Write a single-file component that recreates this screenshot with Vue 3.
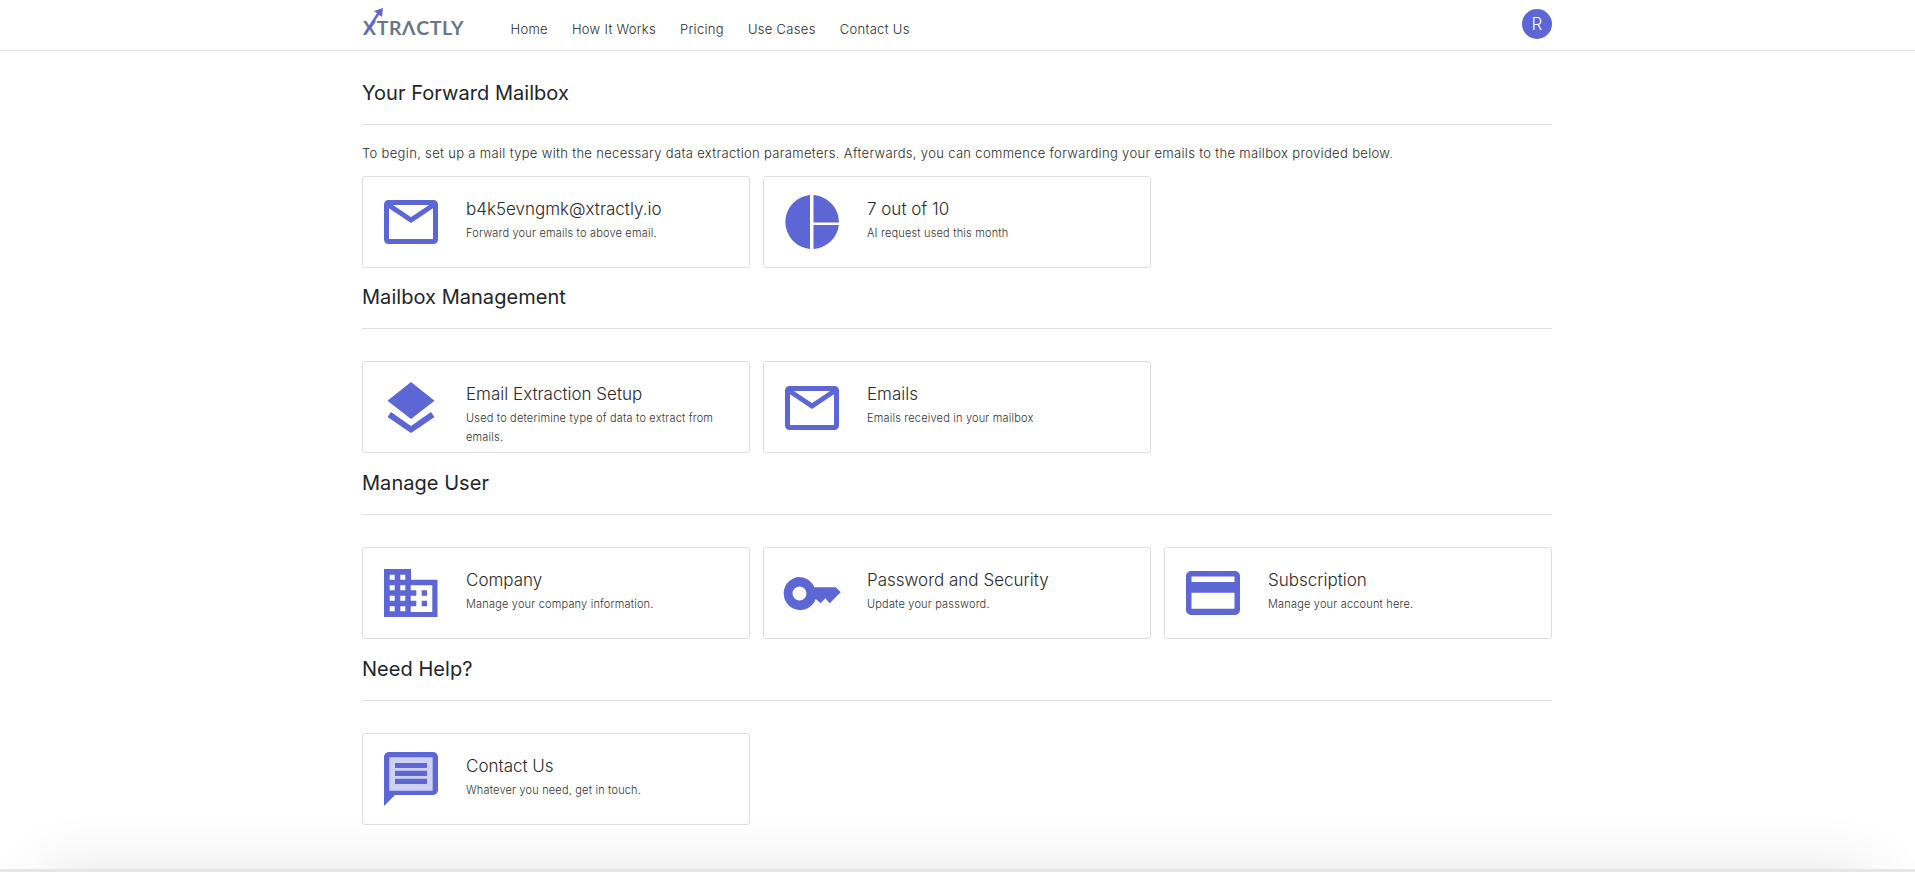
<script setup>
const sections = [
  {
    title: 'Your Forward Mailbox',
    intro: 'To begin, set up a mail type with the necessary data extraction parameters. Afterwards, you can commence forwarding your emails to the mailbox provided below.',
    cards: [
      { icon: 'mail', title: 'b4k5evngmk@xtractly.io', sub: 'Forward your emails to above email.' },
      { icon: 'pie', title: '7 out of 10', sub: 'AI request used this month' },
    ],
  },
  {
    title: 'Mailbox Management',
    cards: [
      { icon: 'layers', title: 'Email Extraction Setup', sub: 'Used to deterimine type of data to extract from emails.' },
      { icon: 'mail', title: 'Emails', sub: 'Emails received in your mailbox' },
    ],
  },
  {
    title: 'Manage User',
    cards: [
      { icon: 'building', title: 'Company', sub: 'Manage your company information.' },
      { icon: 'key', title: 'Password and Security', sub: 'Update your password.' },
      { icon: 'card', title: 'Subscription', sub: 'Manage your account here.' },
    ],
  },
  {
    title: 'Need Help?',
    cards: [
      { icon: 'chat', title: 'Contact Us', sub: 'Whatever you need, get in touch.' },
    ],
  },
]
const nav = ['Home', 'How It Works', 'Pricing', 'Use Cases', 'Contact Us']
</script>

<template>
  <div class="page">
    <header class="topbar">
      <div class="topbar-inner">
        <a class="logo">
          <span class="logo-text">XTRΛCTLY</span>
          <svg class="logo-arrow" width="22" height="30" viewBox="0 0 22 30">
            <path d="M2 27 L17 4" stroke="#5c66d4" stroke-width="2.4" fill="none" />
            <path d="M11 4 L20 1 L19 10 Z" fill="#5c66d4" />
          </svg>
        </a>
        <nav class="nav">
          <a v-for="item in nav" :key="item">{{ item }}</a>
        </nav>
        <div class="avatar">R</div>
      </div>
    </header>

    <main class="content">
      <section v-for="s in sections" :key="s.title" class="section">
        <h2>{{ s.title }}</h2>
        <hr />
        <p v-if="s.intro" class="intro">{{ s.intro }}</p>
        <div class="grid" :class="{ 'grid-intro': s.intro }">
          <div v-for="c in s.cards" :key="c.title" class="card">
            <div class="icon-box">
              <svg v-if="c.icon === 'mail'" width="54" height="44" viewBox="0 0 54 44">
                <rect x="2.5" y="2.500" width="49" height="39" rx="2" fill="none" stroke="#5c66d4" stroke-width="5" />
                <path d="M3 4 L27 20 L51 4" fill="none" stroke="#5c66d4" stroke-width="5" />
              </svg>
              <svg v-else-if="c.icon === 'pie'" width="54" height="54" viewBox="0 0 54 54">
                <path d="M25 0.1 A27 27 0 0 0 25 53.9 Z" fill="#5c66d4" />
                <path d="M28.500 0.1 A27 27 0 0 1 53.9 27.500 L28.500 27.500 Z" fill="#5c66d4" />
                <path d="M28.500 30 L53.800 30 A27 27 0 0 1 28.500 53.900 Z" fill="#5c66d4" />
              </svg>
              <svg v-else-if="c.icon === 'layers'" width="48" height="51" viewBox="0 0 48 51">
                <path d="M24 0 L47.5 18.7 L24 37 L0.5 18.7 Z" fill="#5c66d4" />
                <path d="M0.5 35 L4 30 L24 44 L44 30 L47.5 35 L24 51 Z" fill="#5c66d4" />
              </svg>
              <svg v-else-if="c.icon === 'building'" width="54" height="48" viewBox="0 0 54 48">
                <path d="M0 0 H27 V10.700 H53.500 V48 H0 Z" fill="#5c66d4" />
                <path d="M5.700 5.700 h5 v5 h-5 z M16.300 5.700 h5 v5 h-5 z M5.700 16.300 h5 v5 h-5 z M16.300 16.300 h5 v5 h-5 z M5.700 26.700 h5 v5 h-5 z M16.300 26.700 h5 v5 h-5 z M5.700 37.300 h5 v5 h-5 z M16.300 37.300 h5 v5 h-5 z" fill="#fff" />
                <path d="M26.700 16.300 H48.300 V43 H26.700 V37.300 H32.300 V31.700 H26.700 V26.700 H32.300 V21.300 H26.700 Z" fill="#fff" />
                <path d="M37.700 21.300 h5.300 v5.400 h-5.300 z M37.700 31.700 h5.300 v5.600 h-5.300 z" fill="#5c66d4" />
              </svg>
              <svg v-else-if="c.icon === 'key'" width="58" height="33" viewBox="0 0 58 33">
                <path fill-rule="evenodd" d="M16.500 0 A16.500 16.500 0 0 1 31.500 10.300 H52.700 L57.700 15.300 L46.700 26.300 L42.300 21.300 L37.700 26.300 L32.700 22 A16.500 16.500 0 1 1 16.500 0 Z M16.500 9.500 A7 7 0 1 0 16.500 23.500 A7 7 0 1 0 16.500 9.500 Z" fill="#5c66d4" />
              </svg>
              <svg v-else-if="c.icon === 'card'" width="54" height="44" viewBox="0 0 54 44">
                <path fill-rule="evenodd" d="M5 0 H49 A5 5 0 0 1 54 5 V39 A5 5 0 0 1 49 44 H5 A5 5 0 0 1 0 39 V5 A5 5 0 0 1 5 0 Z M5.500 5.500 V11 H48.500 V5.500 Z M5.500 21.700 V37.700 H48.500 V21.700 Z" fill="#5c66d4" />
              </svg>
              <svg v-else width="54" height="54" viewBox="0 0 54 54">
                <path d="M5 0 H49 A5 5 0 0 1 54 5 V38 A5 5 0 0 1 49 43 H11 L0 54 V5 A5 5 0 0 1 5 0 Z" fill="#5c66d4" />
                <path d="M5.300 5.300 H48.700 V38.700 H5.300 Z" fill="#ced1f1" />
                <path d="M11 11 H43 V16 H11 Z M11 18.700 H43 V24 H11 Z M11 26.700 H43 V32 H11 Z" fill="#5c66d4" />
              </svg>
            </div>
            <div class="card-text">
              <h3>{{ c.title }}</h3>
              <p>{{ c.sub }}</p>
            </div>
          </div>
        </div>
      </section>
    </main>

    <footer class="bottom"></footer>
  </div>
</template>

<style>
html, body { margin: 0; overflow: hidden; background: #fff; }
</style>

<style scoped>
.page {
  height: 872px;
  overflow: hidden;
  position: relative;
  font-family: "Inter", "Liberation Sans", sans-serif;
  color: #333;
  background: #fff;
}
.topbar {
  height: 50px;
  border-bottom: 1px solid #e3e3e3;
}
.topbar-inner {
  width: 1190px;
  margin: 0 0 0 362px;
  height: 100%;
  display: flex;
  align-items: center;
}
.logo {
  position: relative;
  width: 148.5px;
  height: 50px;
  display: flex;
  align-items: center;
}
.logo-text {
  font-family: "Lato", sans-serif;
  font-weight: 700;
  font-size: 19.5px;
  letter-spacing: 0.6px;
  color: #6b7884;
  margin: 4px 0 0 1px;
}
.logo-arrow {
  position: absolute;
  left: 1px;
  top: 7px;
}
.nav {
  display: flex;
  gap: 24px;
  padding-top: 7px;
  font-size: 13px;
  font-weight: 350;
  letter-spacing: 0.3px;
  color: #2b2b2b;
}
.avatar {
  margin-left: auto;
  width: 30px;
  height: 30px;
  margin-top: -3px;
  border-radius: 50%;
  background: #5c66d4;
  color: #fff;
  font-size: 17px;
  font-weight: 300;
  display: flex;
  align-items: center;
  justify-content: center;
}
.content {
  width: 1190px;
  margin: 0 0 0 362px;
  padding-top: 27px;
}
.section { margin-bottom: 14.6px; }
h2 {
  margin: 0;
  font-size: 20px;
  line-height: 30px;
  font-weight: 400;
  letter-spacing: 0.04px;
  color: #212529;
}
hr {
  margin: 16px 0 0;
  border: 0;
  border-top: 1px solid #dedede;
}
.intro {
  margin: 18px 0 0;
  font-size: 13px;
  line-height: 20px;
  font-weight: 300;
  letter-spacing: 0.33px;
  color: #2b2b2b;
}
.grid {
  display: grid;
  grid-template-columns: repeat(3, 388px);
  gap: 13px;
  margin-top: 32px;
}
.grid-intro { margin-top: 12.8px; }
.card {
  height: 92px;
  box-sizing: border-box;
  border: 1px solid #dedede;
  border-radius: 3px;
  display: flex;
  align-items: center;
}
.icon-box {
  width: 96px;
  flex: none;
  padding-top: 1px;
  display: flex;
  align-items: center;
  justify-content: center;
}
.icon-box svg { display: block; }
.card-text {
  align-self: flex-start;
  margin-left: 7px;
  padding-top: 21px;
  padding-right: 12px;
}
h3 {
  margin: 0;
  font-size: 17px;
  line-height: 22px;
  font-weight: 300;
  color: #2b2b2b;
}
.card-text p {
  margin: 4px 0 0;
  font-size: 11px;
  line-height: 19px;
  font-weight: 300;
  letter-spacing: 0.18px;
  color: #333;
}
.bottom {
  position: absolute;
  left: 0;
  right: 0;
  top: 869px;
  height: 200px;
  background: #e6e6e6;
  box-shadow: 0 -40px 60px -40px rgba(0, 0, 0, 0.1);
}
</style>
